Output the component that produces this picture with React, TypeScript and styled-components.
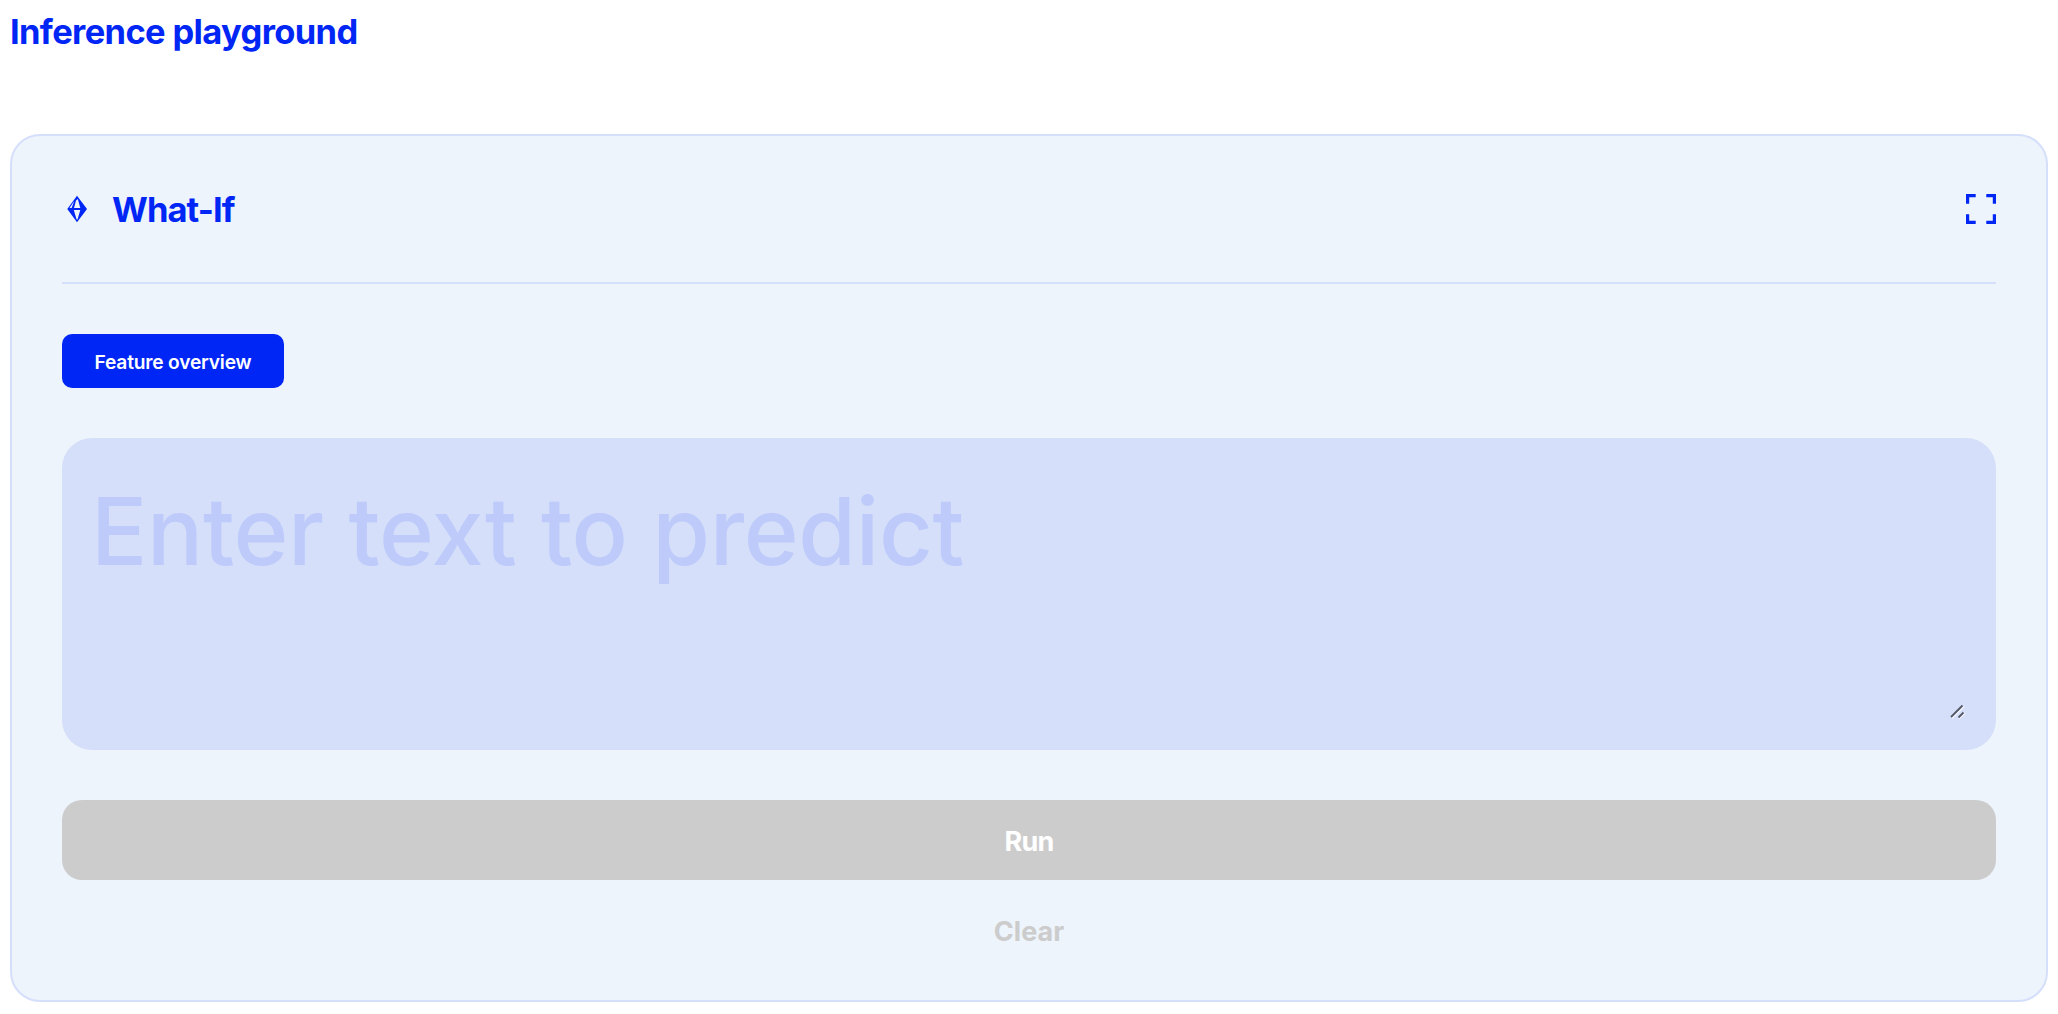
import {useState} from 'react';
import styled, {createGlobalStyle} from 'styled-components';

const colors = {
    primary: "#0026f5",
    card: "#edf4fc",
    border: "#d5dffb",
    field: "#d5dffa",
    placeholder: "#becbfa",
    disabled: "#cccccc",
};

const GlobalStyle = createGlobalStyle`
    * {
        box-sizing: border-box;
    }

    body {
        margin: 0;
        background-color: #ffffff;
        font-family: Inter, "Liberation Sans", sans-serif;
    }
`;

const Page = styled.main`
    display: flex;
    flex-direction: column;
    padding: 8px 10px 12px;
`;

const PageTitle = styled.h1`
    color: ${colors.primary};
    font-size: 34.5px;
    font-weight: 700;
    line-height: 48px;
    letter-spacing: -0.65px;
    margin: 0 0 78px;
`;

const Card = styled.section`
    display: flex;
    flex-direction: column;
    height: 868px;
    padding: 0 50px;
    background-color: ${colors.card};
    border: 2px solid ${colors.border};
    border-radius: 30px;
`;

const CardHeader = styled.header`
    display: flex;
    align-items: center;
    justify-content: space-between;
    height: 148px;
    border-bottom: 2px solid ${colors.border};
`;

const Heading = styled.div`
    display: flex;
    align-items: center;
    gap: 20px;
`;

const CardTitle = styled.h2`
    color: ${colors.primary};
    font-size: 34.5px;
    font-weight: 700;
    line-height: 48px;
    letter-spacing: -0.9px;
    margin: 0;
    padding-top: 2px;
`;

const Button = styled.button`
    border: none;
    font-family: inherit;
    font-weight: 700;
    cursor: pointer;
    padding: 0;
`;

const IconButton = styled(Button)`
    display: flex;
    background: none;
`;

const OverviewButton = styled(Button)`
    align-self: flex-start;
    width: 222px;
    height: 54px;
    margin: 50px 0;
    padding-top: 1px;
    background-color: ${colors.primary};
    border-radius: 10px;
    color: #ffffff;
    font-size: 19.2px;
    font-weight: 600;
    letter-spacing: -0.2px;
`;

const Field = styled.div`
    position: relative;
    display: flex;
    height: 312px;
    padding: 32px 32px 32px 29px;
    background-color: ${colors.field};
    border-radius: 30px;
`;

const TextArea = styled.textarea`
    flex: 1;
    padding: 0;
    border: none;
    outline: none;
    resize: none;
    background: none;
    color: ${colors.primary};
    font-family: inherit;
    font-size: 93.5px;
    font-weight: 500;
    line-height: 122px;
    letter-spacing: -0.35px;

    &::placeholder {
        color: ${colors.placeholder};
        opacity: 1;
    }
`;

const ResizeGrip = styled.svg`
    position: absolute;
    right: 30px;
    bottom: 30px;
`;

const RunButton = styled(Button)`
    height: 80px;
    margin-top: 50px;
    padding-top: 2px;
    background-color: ${colors.disabled};
    border-radius: 20px;
    color: #ffffff;
    font-size: 27px;
    letter-spacing: -0.8px;
`;

const ClearButton = styled(Button)`
    height: 60px;
    margin-top: 20px;
    padding-top: 2px;
    background: none;
    color: ${colors.disabled};
    font-size: 27px;
    letter-spacing: 0;
`;

const DiamondIcon = () => (
    <svg width="30" height="30" viewBox="0 0 30 30">
        <path d="M15 1.8 25 15 15 28.2 5.3 15Z" fill={colors.primary}/>
        <path d="M14 6.5 12 14H18.3L15.8 5ZM11.8 16H18.3L15.5 25.5H14.6ZM12.4 6.8 7.5 14H9.6Z" fill={colors.card}/>
    </svg>
);

const FullscreenIcon = () => (
    <svg width="30" height="30" viewBox="0 0 30 30" fill="none" stroke={colors.primary} strokeWidth="3.2">
        <path d="M9.7 1.6H1.6V9.7M20.3 1.6H28.4V9.7M9.7 28.4H1.6V20.3M20.3 28.4H28.4V20.3"/>
    </svg>
);

const App = () => {
    const [text, setText] = useState("");

    return (
        <Page>
            <GlobalStyle/>
            <PageTitle>Inference playground</PageTitle>
            <Card>
                <CardHeader>
                    <Heading>
                        <DiamondIcon/>
                        <CardTitle>What-If</CardTitle>
                    </Heading>
                    <IconButton aria-label="Fullscreen"><FullscreenIcon/></IconButton>
                </CardHeader>
                <OverviewButton>Feature overview</OverviewButton>
                <Field>
                    <TextArea
                        placeholder="Enter text to predict"
                        value={text}
                        onChange={(e) => setText(e.target.value)}
                    />
                    <ResizeGrip width="18" height="18" viewBox="0 0 18 18" fill="none">
                        <path d="M4 16.5 16 4.5M11 17 17 11" stroke="#f2f5fd" strokeWidth="1.5"/>
                        <path d="M3 15 14.5 3.5M10.5 15.5 15.5 10.5" stroke="#565a66" strokeWidth="1.8"/>
                    </ResizeGrip>
                </Field>
                <RunButton disabled={!text}>Run</RunButton>
                <ClearButton disabled={!text} onClick={() => setText("")}>Clear</ClearButton>
            </Card>
        </Page>
    );
};

export default App;
